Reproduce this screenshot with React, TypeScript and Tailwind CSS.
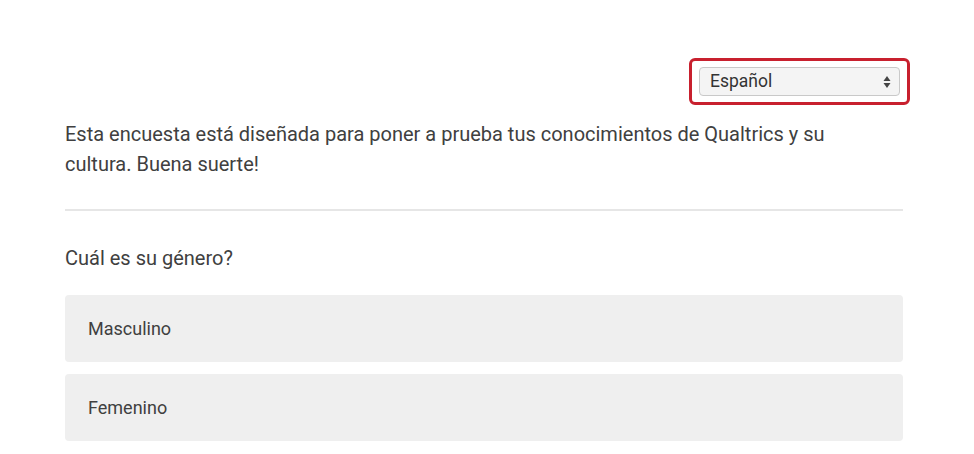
const options = ["Masculino", "Femenino"];

export default function App() {
  return (
    <div className="min-h-[454px] bg-white font-['Roboto',sans-serif] text-[#404040]">
      <div className="ml-[65px] w-[838px] pt-[58px]">
        {/* Language picker */}
        <div className="flex justify-end -mr-[7px]">
          <div className="rounded-[6px] border-[3px] border-[#c8202e] px-[7px] py-[6px]">
            <div className="flex h-[29px] w-[201px] items-center justify-between rounded-[4px] border border-[#c9c9c9] bg-[#f4f4f4] pl-[10px] pr-[8px] text-[17.5px] text-[#333]">
              <span>Español</span>
              <svg width="8" height="14" viewBox="0 0 8 14" className="fill-[#444]">
                <path d="M4 1 L7.5 6 H0.5 Z" />
                <path d="M4 13 L7.5 8 H0.5 Z" />
              </svg>
            </div>
          </div>
        </div>

        {/* Intro */}
        <p className="mt-[14px] pr-[30px] text-[20px] leading-[30px]">
          Esta encuesta está diseñada para poner a prueba tus conocimientos de Qualtrics y su cultura. Buena suerte!
        </p>

        <div className="mt-[30px] h-[2px] bg-[#e6e6e6]" />

        {/* Question */}
        <p className="mt-[32px] text-[20px] leading-[30px]">Cuál es su género?</p>

        <div className="mt-[22px] flex flex-col gap-[12px]">
          {options.map((o) => (
            <div
              key={o}
              className="flex h-[67px] items-center rounded-[4px] bg-[#efefef] px-[23px] text-[18px]"
            >
              {o}
            </div>
          ))}
        </div>
      </div>
    </div>
  );
}
